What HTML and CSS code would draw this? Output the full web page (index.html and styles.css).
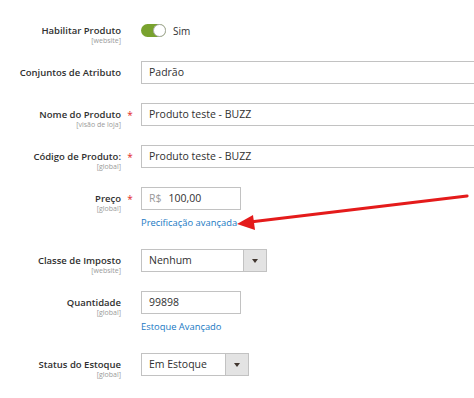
FILE: index.html
```html
<!DOCTYPE html>
<html lang="pt-BR">
<head>
<meta charset="UTF-8">
<title>Produto</title>
<link rel="stylesheet" href="styles.css">
</head>
<body>

<div class="form">
    <div class="field">
        <div class="label">Habilitar Produto<span class="scope">[website]</span></div>
        <div class="req"></div>
        <div class="control toggle-row">
            <span class="toggle"><span class="knob"></span></span>
            <span class="toggle-text">Sim</span>
        </div>
    </div>

    <div class="field">
        <div class="label">Conjuntos de Atributo</div>
        <div class="req"></div>
        <div class="control"><div class="input wide">Padrão</div></div>
    </div>

    <div class="field">
        <div class="label">Nome do Produto<span class="scope">[visão de loja]</span></div>
        <div class="req">*</div>
        <div class="control"><div class="input wide">Produto teste - BUZZ</div></div>
    </div>

    <div class="field">
        <div class="label">Código de Produto:<span class="scope">[global]</span></div>
        <div class="req">*</div>
        <div class="control"><div class="input wide">Produto teste - BUZZ</div></div>
    </div>

    <div class="field">
        <div class="label">Preço<span class="scope">[global]</span></div>
        <div class="req">*</div>
        <div class="control">
            <div class="input short"><span class="addon">R$</span>100,00</div>
            <a class="link" href="#">Precificação avançada</a>
        </div>
    </div>

    <div class="field">
        <div class="label">Classe de Imposto<span class="scope">[website]</span></div>
        <div class="req"></div>
        <div class="control">
            <div class="select tax"><span class="select-text">Nenhum</span><span class="select-btn"></span></div>
        </div>
    </div>

    <div class="field">
        <div class="label">Quantidade<span class="scope">[global]</span></div>
        <div class="req"></div>
        <div class="control">
            <div class="input short">99898</div>
            <a class="link" href="#">Estoque Avançado</a>
        </div>
    </div>

    <div class="field">
        <div class="label">Status do Estoque<span class="scope">[global]</span></div>
        <div class="req"></div>
        <div class="control">
            <div class="select stock"><span class="select-text">Em Estoque</span><span class="select-btn"></span></div>
        </div>
    </div>
</div>

<svg class="arrow" width="474" height="398" viewBox="0 0 474 398">
    <line x1="467" y1="196" x2="250" y2="222" stroke="#e41b1b" stroke-width="3.2" stroke-linecap="round"/>
    <polygon points="237,224 253,215 255,230" fill="#e41b1b"/>
</svg>

</body>
</html>
```

FILE: styles.css
```css
body {
    margin: 0;
    padding: 0;
    background: #fff;
    font-family: "Open Sans", "Liberation Sans", sans-serif;
    color: #303030;
    overflow: hidden;
}

.form {
    padding-top: 19px;
}

.field {
    display: grid;
    grid-template-columns: 121px 20px 1fr;
    margin-bottom: 19px;
}

.label {
    height: 23px;
    font-size: 9.5px;
    font-weight: 600;
    line-height: 23px;
    text-align: right;
    white-space: nowrap;
}

.scope {
    display: block;
    font-size: 7px;
    font-weight: 400;
    color: #9a9a9a;
    line-height: 9px;
    margin-top: -6px;
}

.req {
    height: 23px;
    color: #e22626;
    font-size: 10px;
    line-height: 25px;
    text-align: center;
    padding-right: 2px;
}

.control {
    display: flex;
    flex-direction: column;
    align-items: flex-start;
    overflow: hidden;
}

.toggle-row {
    flex-direction: row;
    align-items: center;
    height: 23px;
}

.toggle {
    width: 25px;
    height: 13px;
    border-radius: 7px;
    background: #79a22e;
    position: relative;
}

.knob {
    position: absolute;
    right: 0;
    top: 0;
    width: 13px;
    height: 13px;
    border-radius: 50%;
    background: #fff;
    box-sizing: border-box;
    border: 1px solid #adadad;
}

.toggle-text {
    font-size: 10px;
    margin-left: 7px;
}

.input {
    height: 23px;
    box-sizing: border-box;
    border: 1px solid #c2c2c2;
    font-size: 10.5px;
    line-height: 21px;
    padding-left: 7px;
    white-space: nowrap;
    background: #fff;
}

.wide {
    width: 360px;
}

.short {
    width: 100px;
}

.addon {
    color: #9a9a9a;
    margin-right: 7px;
}

.link {
    color: #1979c3;
    font-size: 9.4px;
    line-height: 14px;
    text-decoration: none;
    margin-top: 6px;
}

.select {
    display: flex;
    height: 23px;
    box-sizing: border-box;
    border: 1px solid #c2c2c2;
    font-size: 10.5px;
}

.tax {
    width: 126px;
}

.stock {
    width: 108px;
}

.select-text {
    flex: 1;
    line-height: 21px;
    padding-left: 7px;
}

.select-btn {
    width: 22px;
    background: #e3e3e3;
    border-left: 1px solid #c2c2c2;
    position: relative;
}

.select-btn::after {
    content: "";
    position: absolute;
    left: 8px;
    top: 9px;
    border-left: 3px solid transparent;
    border-right: 3px solid transparent;
    border-top: 4px solid #41362f;
}

.arrow {
    position: absolute;
    left: 0;
    top: 0;
    pointer-events: none;
}
```
